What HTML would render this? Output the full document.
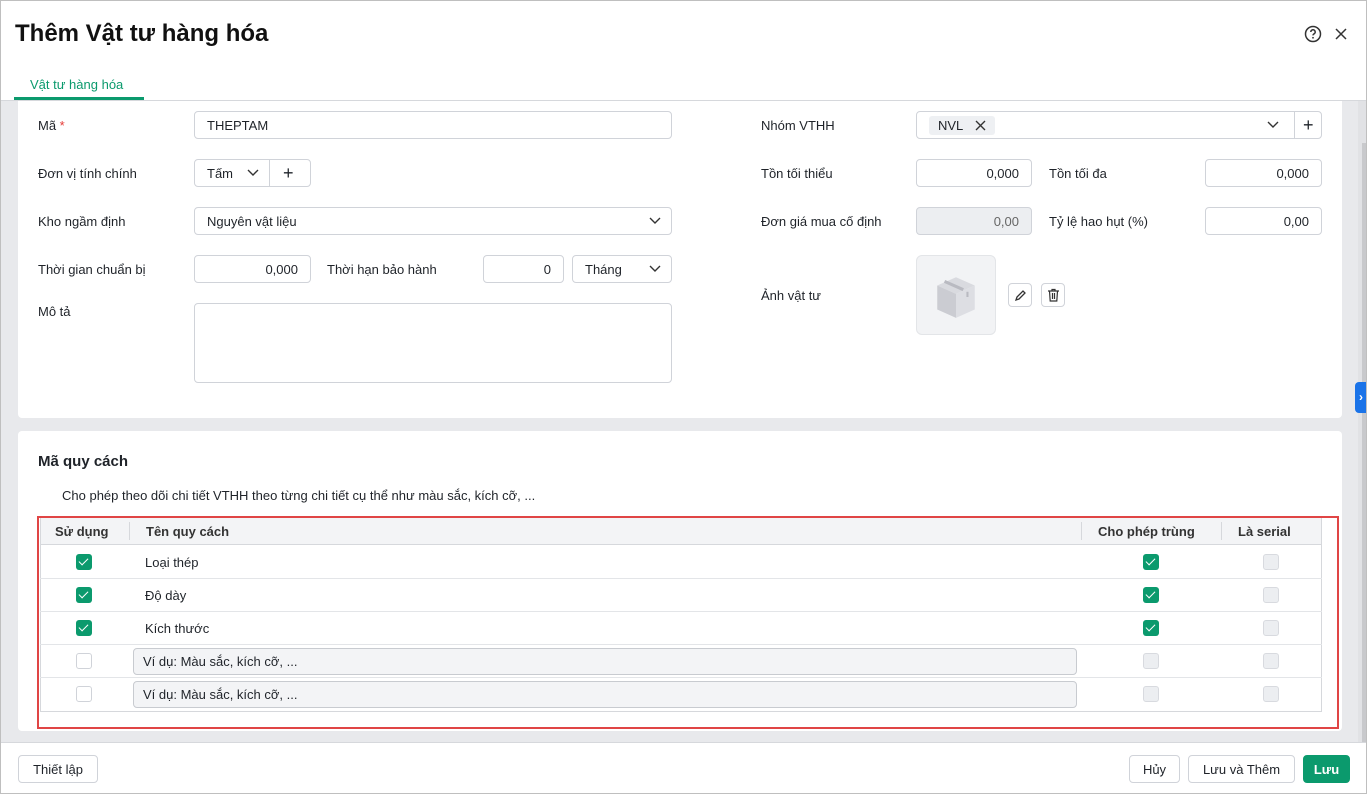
<!DOCTYPE html>
<html><head><meta charset="utf-8"><style>
*{box-sizing:border-box;margin:0;padding:0}
body{width:1367px;height:794px;overflow:hidden;font-family:"Liberation Sans",Arial,sans-serif;font-size:13px;color:#1f2329;background:#fff;position:relative}
.frame{position:absolute;left:0;top:0;width:1367px;height:794px;border:1px solid #bfbfbf;pointer-events:none;z-index:10}
.a{position:absolute}
.in{position:absolute;border:1px solid #d0d3d9;border-radius:4px;background:#fff;height:28px;line-height:28px;padding:0 12px}
.r{text-align:right}
.lbl{position:absolute;font-size:13px}
.cb{position:absolute;width:16px;height:16px;border-radius:3px}
.on{background:#0b9a6d}
.on:after{content:"";position:absolute;left:5px;top:2px;width:4px;height:8px;border:solid #fff;border-width:0 1.5px 1.5px 0;transform:rotate(45deg)}
.off{border:1px solid #d0d3d9;background:#fff}
.dis{border:1px solid #d8dadf;background:#eceef1}
.btn{position:absolute;height:28px;border:1px solid #d0d3d9;border-radius:4px;background:#fff;line-height:27px;text-align:center}
.hl{position:absolute;left:40px;width:1282px;height:1px;background:#e3e5e8}
</style></head><body>
<div class="frame"></div>
<div class="a" style="left:15px;top:20px;font-size:24px;font-weight:bold;color:#111">Thêm Vật tư hàng hóa</div>
<svg class="a" style="left:1303px;top:24px" width="20" height="20" viewBox="0 0 20 20"><circle cx="10" cy="10" r="7.5" fill="none" stroke="#333" stroke-width="1.5"/><path d="M7.8 8a2.2 2.2 0 1 1 3 2c-.6.3-.8.7-.8 1.4" fill="none" stroke="#333" stroke-width="1.5"/><circle cx="10" cy="13.8" r=".9" fill="#333"/></svg>
<svg class="a" style="left:1333px;top:26px" width="16" height="16" viewBox="0 0 16 16"><path d="M3 3l10 10M13 3L3 13" stroke="#333" stroke-width="1.5"/></svg>
<div class="a" style="left:30px;top:77px;color:#0b9a6d;font-size:13px">Vật tư hàng hóa</div>
<div class="a" style="left:14px;top:97px;width:130px;height:3px;background:#0b9a6d"></div>
<div class="a" style="left:0;top:100px;width:1367px;height:1px;background:#d6d8dc"></div>
<div class="a" style="left:0;top:101px;width:1367px;height:641px;background:#e8e9ec"></div>
<div class="a" style="left:1358px;top:101px;width:9px;height:641px;background:#e1e2e5"></div>
<div class="a" style="left:1362px;top:143px;width:4px;height:599px;background:#c8c9cc"></div>
<div class="a" style="left:1355px;top:382px;width:12px;height:31px;background:#1a73e8;border-radius:4px 0 0 4px;color:#fff;font-size:12px;line-height:31px;text-align:center;font-weight:bold">›</div>
<!-- card 1 -->
<div class="a" style="left:18px;top:101px;width:1324px;height:317px;background:#fff;border-radius:0 0 4px 4px"></div>
<div class="lbl" style="left:38px;top:118px">Mã <span style="color:#e53935">*</span></div>
<div class="in" style="left:194px;top:111px;width:478px">THEPTAM</div>
<div class="lbl" style="left:38px;top:166px">Đơn vị tính chính</div>
<div class="in" style="left:194px;top:159px;width:117px;padding:0 0 0 12px">Tấm<svg class="a" style="left:52px;top:8px" width="12" height="10"><path d="M1 2l5 5 5-5" fill="none" stroke="#333" stroke-width="1.4"/></svg><div class="a" style="left:74px;top:0;width:1px;height:26px;background:#d0d3d9"></div><span class="a" style="left:88px;top:0;font-size:18px;line-height:26px">+</span></div>
<div class="lbl" style="left:38px;top:214px">Kho ngầm định</div>
<div class="in" style="left:194px;top:207px;width:478px">Nguyên vật liệu<svg class="a" style="left:454px;top:8px" width="12" height="10"><path d="M1 2l5 5 5-5" fill="none" stroke="#333" stroke-width="1.4"/></svg></div>
<div class="lbl" style="left:38px;top:262px">Thời gian chuẩn bị</div>
<div class="in r" style="left:194px;top:255px;width:117px">0,000</div>
<div class="lbl" style="left:327px;top:262px">Thời hạn bảo hành</div>
<div class="in r" style="left:483px;top:255px;width:81px">0</div>
<div class="in" style="left:572px;top:255px;width:100px">Tháng<svg class="a" style="left:76px;top:8px" width="12" height="10"><path d="M1 2l5 5 5-5" fill="none" stroke="#333" stroke-width="1.4"/></svg></div>
<div class="lbl" style="left:38px;top:304px">Mô tả</div>
<div class="in" style="left:194px;top:303px;width:478px;height:80px"></div>
<div class="lbl" style="left:761px;top:118px">Nhóm VTHH</div>
<div class="in" style="left:916px;top:111px;width:406px;padding:0">
<div class="a" style="left:12px;top:4px;width:66px;height:19px;background:#eef0f3;border-radius:3px;line-height:19px;padding-left:9px">NVL<svg class="a" style="left:46px;top:4px" width="11" height="11"><path d="M1 1l9 9M10 1L1 10" stroke="#333" stroke-width="1.4"/></svg></div>
<svg class="a" style="left:350px;top:8px" width="12" height="10"><path d="M1 2l5 5 5-5" fill="none" stroke="#333" stroke-width="1.4"/></svg>
<div class="a" style="left:377px;top:0;width:1px;height:26px;background:#d0d3d9"></div><span class="a" style="left:386px;top:0;font-size:18px;line-height:26px">+</span></div>
<div class="lbl" style="left:761px;top:166px">Tồn tối thiểu</div>
<div class="in r" style="left:916px;top:159px;width:116px">0,000</div>
<div class="lbl" style="left:1049px;top:166px">Tồn tối đa</div>
<div class="in r" style="left:1205px;top:159px;width:117px">0,000</div>
<div class="lbl" style="left:761px;top:214px">Đơn giá mua cố định</div>
<div class="in r" style="left:916px;top:207px;width:116px;background:#eceef1;color:#666">0,00</div>
<div class="lbl" style="left:1049px;top:214px">Tỷ lệ hao hụt (%)</div>
<div class="in r" style="left:1205px;top:207px;width:117px">0,00</div>
<div class="lbl" style="left:761px;top:288px">Ảnh vật tư</div>
<div class="a" style="left:916px;top:255px;width:80px;height:80px;background:#f2f3f5;border:1px solid #e3e5e8;border-radius:6px">
<svg class="a" style="left:14px;top:16px" width="50" height="50" viewBox="0 0 48 48"><path d="M24 5L42 13 24 21 6 13z" fill="#d9dadf"/><path d="M6 13l18 8v23L6 36z" fill="#cbccd2"/><path d="M42 13L24 21v23l18-8z" fill="#dddee3"/><path d="M13 9l18 8" stroke="#b9bac1" stroke-width="3"/><path d="M35 19v5" stroke="#b9bac1" stroke-width="2"/></svg></div>
<div class="btn" style="left:1008px;top:283px;width:24px;height:24px"><svg class="a" style="left:5px;top:5px" width="13" height="13"><path d="M2 11l1-3 6-6 2 2-6 6z" fill="none" stroke="#333" stroke-width="1.3"/></svg></div>
<div class="btn" style="left:1041px;top:283px;width:24px;height:24px"><svg class="a" style="left:5px;top:4px" width="13" height="15"><path d="M1 3h11M5 3V1.5h3V3M2.5 3l.7 10h6.6l.7-10M5.5 5v6M7.5 5v6" fill="none" stroke="#333" stroke-width="1.2"/></svg></div>
<!-- card 2 -->
<div class="a" style="left:18px;top:431px;width:1324px;height:300px;background:#fff;border-radius:4px"></div>
<div class="a" style="left:38px;top:453px;font-size:15px;font-weight:bold">Mã quy cách</div>
<div class="a" style="left:62px;top:488px">Cho phép theo dõi chi tiết VTHH theo từng chi tiết cụ thể như màu sắc, kích cỡ, ...</div>
<div class="a" style="left:40px;top:517px;width:1282px;height:195px;border:1px solid #d6d8dc"></div>
<div class="a" style="left:41px;top:518px;width:1280px;height:27px;background:#f3f4f6;border-bottom:1px solid #d6d8dc"></div>
<div class="a" style="left:55px;top:524px;font-weight:bold;color:#333">Sử dụng</div>
<div class="a" style="left:129px;top:522px;width:1px;height:18px;background:#d6d8dc"></div>
<div class="a" style="left:146px;top:524px;font-weight:bold;color:#333">Tên quy cách</div>
<div class="a" style="left:1081px;top:522px;width:1px;height:18px;background:#d6d8dc"></div>
<div class="a" style="left:1098px;top:524px;font-weight:bold;color:#333">Cho phép trùng</div>
<div class="a" style="left:1221px;top:522px;width:1px;height:18px;background:#d6d8dc"></div>
<div class="a" style="left:1238px;top:524px;font-weight:bold;color:#333">Là serial</div>
<div class="hl" style="top:578px"></div><div class="hl" style="top:611px"></div><div class="hl" style="top:644px"></div><div class="hl" style="top:677px"></div>
<div class="cb on" style="left:76px;top:554px"></div><div class="a" style="left:145px;top:555px">Loại thép</div>
<div class="cb on" style="left:76px;top:587px"></div><div class="a" style="left:145px;top:588px">Độ dày</div>
<div class="cb on" style="left:76px;top:620px"></div><div class="a" style="left:145px;top:621px">Kích thước</div>
<div class="cb off" style="left:76px;top:653px"></div>
<div class="in" style="left:133px;top:648px;width:944px;height:27px;background:#f3f4f6;border-color:#c8cbd0;padding:0 9px;line-height:26px">Ví dụ: Màu sắc, kích cỡ, ...</div>
<div class="cb off" style="left:76px;top:686px"></div>
<div class="in" style="left:133px;top:681px;width:944px;height:27px;background:#f3f4f6;border-color:#c8cbd0;padding:0 9px;line-height:26px">Ví dụ: Màu sắc, kích cỡ, ...</div>
<div class="cb on" style="left:1143px;top:554px"></div><div class="cb dis" style="left:1263px;top:554px"></div>
<div class="cb on" style="left:1143px;top:587px"></div><div class="cb dis" style="left:1263px;top:587px"></div>
<div class="cb on" style="left:1143px;top:620px"></div><div class="cb dis" style="left:1263px;top:620px"></div>
<div class="cb dis" style="left:1143px;top:653px"></div><div class="cb dis" style="left:1263px;top:653px"></div>
<div class="cb dis" style="left:1143px;top:686px"></div><div class="cb dis" style="left:1263px;top:686px"></div>
<div class="a" style="left:37px;top:516px;width:1302px;height:213px;border:2px solid #e04545"></div>
<!-- footer -->
<div class="a" style="left:0;top:742px;width:1367px;height:52px;background:#fff;border-top:1px solid #d6d8dc"></div>
<div class="btn" style="left:18px;top:755px;width:80px">Thiết lập</div>
<div class="btn" style="left:1129px;top:755px;width:51px">Hủy</div>
<div class="btn" style="left:1188px;top:755px;width:107px">Lưu và Thêm</div>
<div class="btn" style="left:1303px;top:755px;width:47px;background:#0b9a6d;border-color:#0b9a6d;color:#fff;font-weight:bold">Lưu</div>
</body></html>
